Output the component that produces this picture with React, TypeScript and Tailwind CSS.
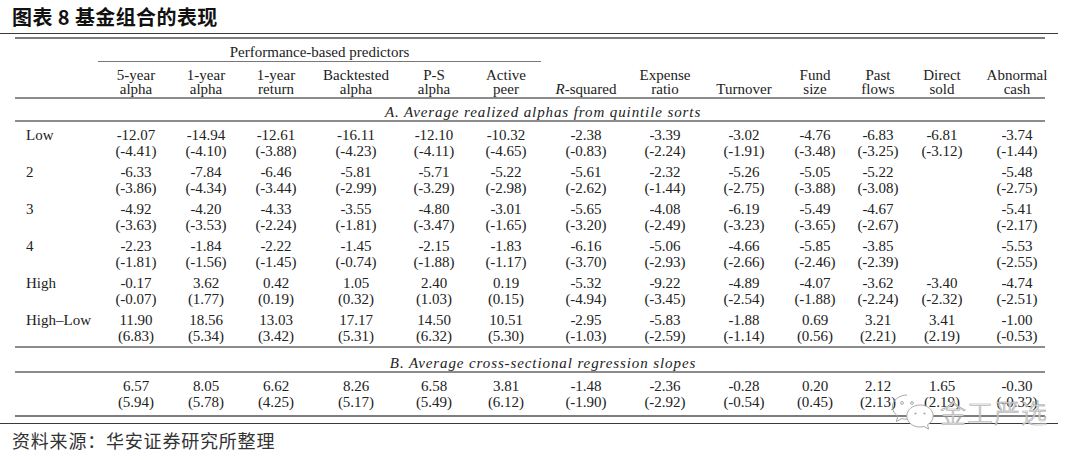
const colW = [
  'w-[70px]',
  'w-[70px]',
  'w-[70px]',
  'w-[90px]',
  'w-[66px]',
  'w-[78px]',
  'w-[82px]',
  'w-[76px]',
  'w-[82px]',
  'w-[60px]',
  'w-[66px]',
  'w-[62px]',
  'w-[88px]',
]

type Cell = [string, string] | null

const headers: [React.ReactNode, React.ReactNode][] = [
  ['5-year', 'alpha'],
  ['1-year', 'alpha'],
  ['1-year', 'return'],
  ['Backtested', 'alpha'],
  ['P-S', 'alpha'],
  ['Active', 'peer'],
  [
    '',
    <>
      <i>R</i>-squared
    </>,
  ],
  ['Expense', 'ratio'],
  ['', 'Turnover'],
  ['Fund', 'size'],
  ['Past', 'flows'],
  ['Direct', 'sold'],
  ['Abnormal', 'cash'],
]

const parse = (s: string): Cell[] =>
  s.split(',').map((p) => {
    const t = p.trim()
    if (!t) return null
    const [a, b] = t.split(' ')
    return [a, b]
  })

const panelA: { label: string; cells: Cell[] }[] = [
  {
    label: 'Low',
    cells: parse(
      '-12.07 (-4.41), -14.94 (-4.10), -12.61 (-3.88), -16.11 (-4.23), -12.10 (-4.11), -10.32 (-4.65), -2.38 (-0.83), -3.39 (-2.24), -3.02 (-1.91), -4.76 (-3.48), -6.83 (-3.25), -6.81 (-3.12), -3.74 (-1.44)',
    ),
  },
  {
    label: '2',
    cells: parse(
      '-6.33 (-3.86), -7.84 (-4.34), -6.46 (-3.44), -5.81 (-2.99), -5.71 (-3.29), -5.22 (-2.98), -5.61 (-2.62), -2.32 (-1.44), -5.26 (-2.75), -5.05 (-3.88), -5.22 (-3.08), , -5.48 (-2.75)',
    ),
  },
  {
    label: '3',
    cells: parse(
      '-4.92 (-3.63), -4.20 (-3.53), -4.33 (-2.24), -3.55 (-1.81), -4.80 (-3.47), -3.01 (-1.65), -5.65 (-3.20), -4.08 (-2.49), -6.19 (-3.23), -5.49 (-3.65), -4.67 (-2.67), , -5.41 (-2.17)',
    ),
  },
  {
    label: '4',
    cells: parse(
      '-2.23 (-1.81), -1.84 (-1.56), -2.22 (-1.45), -1.45 (-0.74), -2.15 (-1.88), -1.83 (-1.17), -6.16 (-3.70), -5.06 (-2.93), -4.66 (-2.66), -5.85 (-2.46), -3.85 (-2.39), , -5.53 (-2.55)',
    ),
  },
  {
    label: 'High',
    cells: parse(
      '-0.17 (-0.07), 3.62 (1.77), 0.42 (0.19), 1.05 (0.32), 2.40 (1.03), 0.19 (0.15), -5.32 (-4.94), -9.22 (-3.45), -4.89 (-2.54), -4.07 (-1.88), -3.62 (-2.24), -3.40 (-2.32), -4.74 (-2.51)',
    ),
  },
  {
    label: 'High–Low',
    cells: parse(
      '11.90 (6.83), 18.56 (5.34), 13.03 (3.42), 17.17 (5.31), 14.50 (6.32), 10.51 (5.30), -2.95 (-1.03), -5.83 (-2.59), -1.88 (-1.14), 0.69 (0.56), 3.21 (2.21), 3.41 (2.19), -1.00 (-0.53)',
    ),
  },
]

const panelB = parse(
  '6.57 (5.94), 8.05 (5.78), 6.62 (4.25), 8.26 (5.17), 6.58 (5.49), 3.81 (6.12), -1.48 (-1.90), -2.36 (-2.92), -0.28 (-0.54), 0.20 (0.45), 2.12 (2.13), 1.65 (2.19), -0.30 (-0.32)',
)

function DataRow({ label, cells }: { label: string; cells: Cell[] }) {
  return (
    <div className="flex h-[37px] pt-[5px] leading-4">
      <div className="w-[86px] shrink-0 pl-[11px] whitespace-nowrap">{label}</div>
      {cells.map((c, i) => (
        <div className={`${colW[i]} shrink-0 text-center whitespace-nowrap`} key={i}>
          {c && (
            <>
              <div>{c[0]}</div>
              <div>{c[1]}</div>
            </>
          )}
        </div>
      ))}
    </div>
  )
}

function WeChatMark() {
  return (
    <svg fill="none" height="40" stroke="#a8a8a8" strokeWidth="1" viewBox="0 0 46 40" width="46">
      <path d="M17 3C9 3 2.5 8.3 2.5 15c0 3.7 2 7 5.3 9.2L6.3 29.5l5.6-3c1.6.5 3.3.7 5.1.7" />
      <circle cx="12" cy="11" r="1.4" />
      <circle cx="22" cy="11" r="1.4" />
      <path
        d="M30 13c-7.4 0-13.2 4.9-13.2 11s5.8 11 13.2 11c1.4 0 2.8-.2 4-.5l4.6 2.6-1.1-4.3c3.4-2 5.7-5.2 5.7-8.8 0-6.1-5.8-11-13.2-11z"
        fill="#fff"
      />
      <circle cx="25.5" cy="21.5" fill="#a8a8a8" r="1.1" stroke="none" />
      <circle cx="34.5" cy="21.5" fill="#a8a8a8" r="1.1" stroke="none" />
    </svg>
  )
}

export default function App() {
  return (
    <div className="relative h-[460px] w-[1080px] overflow-hidden bg-white text-[#222]">
      {/* title */}
      <div className="flex h-[33px] items-center pl-[12px] font-['Noto_Sans_CJK_SC',sans-serif] text-[20px] font-bold tracking-[0.4px] text-[#111]">
        图表 8 基金组合的表现
      </div>
      <div className="h-px w-[1058px] bg-[#3a3a3a]" />

      {/* table */}
      <div className="ml-[15px] mt-[3px] w-[1030px] font-['Liberation_Serif','Times_New_Roman',serif] text-[15px]">
        <div className="h-[2px] bg-[#7d7d7d]" />
        <div className="flex h-[22px] pt-[5px] leading-4">
          <div className="w-[83px] shrink-0" />
          <div className="w-[443px] text-center">Performance-based predictors</div>
        </div>
        <div className="flex">
          <div className="w-[83px] shrink-0" />
          <div className="h-px w-[443px] bg-[#777]" />
        </div>
        <div className="flex h-[35px] pt-[6px] leading-[14px]">
          <div className="w-[86px] shrink-0" />
          {headers.map((h, i) => (
            <div className={`${colW[i]} shrink-0 text-center whitespace-nowrap`} key={i}>
              <div className="h-[14px]">{h[0]}</div>
              <div>{h[1]}</div>
            </div>
          ))}
        </div>
        <div className="h-[2px] bg-[#8c8c8c]" />
        <div className="h-[21px] pt-[5px] pl-[26px] text-center italic leading-4 tracking-[0.9px]">
          A. Average realized alphas from quintile sorts
        </div>
        <div className="h-[2px] bg-[#8c8c8c]" />
        {panelA.map((r) => (
          <DataRow cells={r.cells} key={r.label} label={r.label} />
        ))}
        <div className="mt-[2px] h-[2px] bg-[#8c8c8c]" />
        <div className="h-[23px] pt-[7px] pl-[26px] text-center italic leading-4 tracking-[0.9px]">
          B. Average cross-sectional regression slopes
        </div>
        <div className="h-[2px] bg-[#8c8c8c]" />
        <div className="h-[42px]">
          <DataRow cells={panelB} label="" />
        </div>
        <div className="h-[2px] bg-[#7d7d7d]" />
      </div>

      <div className="mt-[6px] h-px w-[1058px] bg-[#3a3a3a]" />
      <div className="pl-[12px] pt-[4px] font-['Noto_Sans_CJK_SC',sans-serif] text-[18px] leading-6 tracking-[0.8px] text-[#333]">
        资料来源：华安证券研究所整理
      </div>

      {/* watermark */}
      <div className="absolute left-[890px] top-[392px] flex items-center gap-[4px]">
        <WeChatMark />
        <span className="font-['Noto_Sans_CJK_SC',sans-serif] text-[26px] font-light leading-none tracking-[1px] text-white/85 [-webkit-text-stroke:0.6px_#a0a0a0]">
          金工严选
        </span>
      </div>
    </div>
  )
}
